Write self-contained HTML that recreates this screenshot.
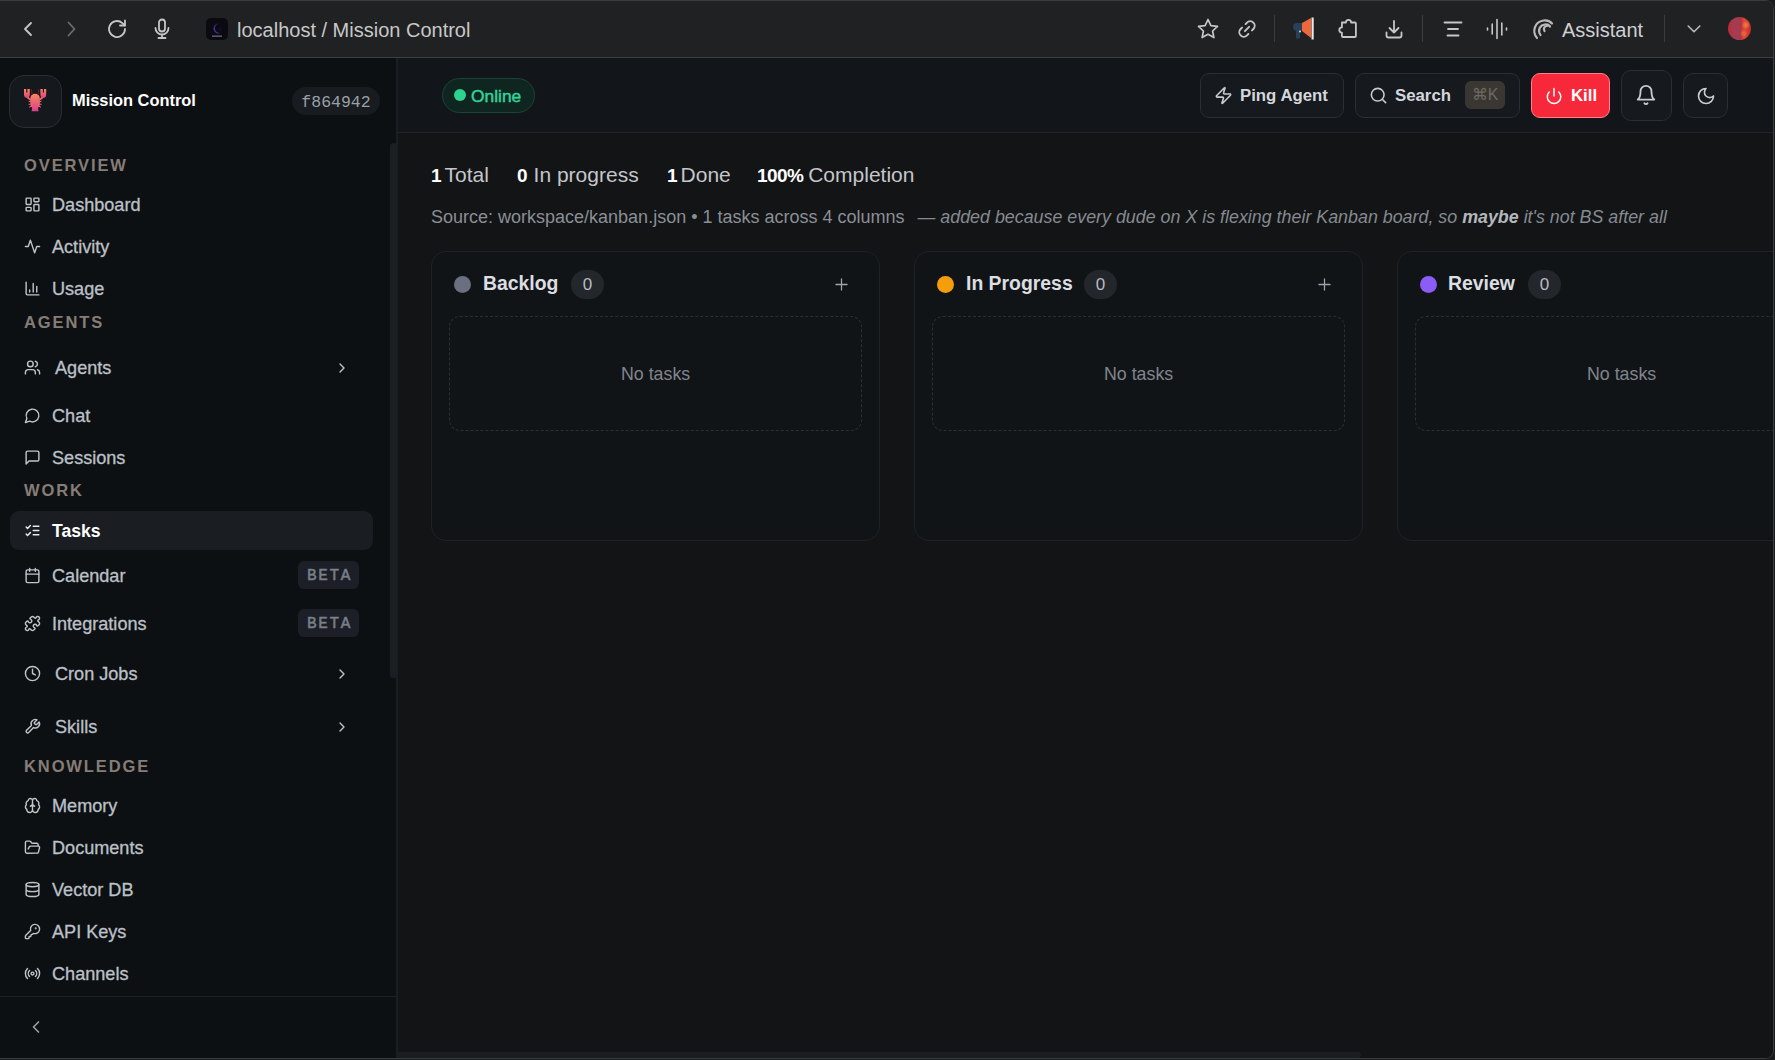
<!DOCTYPE html>
<html><head><meta charset="utf-8">
<style>
*{box-sizing:border-box;margin:0;padding:0}
html,body{width:1775px;height:1060px;overflow:hidden;background:#1b1c1e;font-family:"Liberation Sans",sans-serif}
.a{position:absolute}
.win{position:absolute;left:-12px;top:0;width:1786px;height:1059px;border:1px solid #3b3c3f;border-radius:0 9px 9px 0;overflow:hidden;background:#131415}
.in{position:absolute;left:11px;top:-1px}
svg{display:block;overflow:visible;position:absolute}
.chrome{position:absolute;left:0;top:1px;width:1774px;height:57px;background:#202123;border-bottom:1px solid #3e3f42}
.ct{color:#c8c8c8;font-size:20px;white-space:nowrap}
.ci{fill:none;stroke:#c4c7c5;stroke-width:2;stroke-linecap:round;stroke-linejoin:round}
.vsep{position:absolute;width:1px;height:27px;top:15px;background:#3b3c3f}
.side{position:absolute;left:0;top:58px;width:398px;height:1000px;background:#0d1013;border-right:2px solid #1a1d21}
.sec{position:absolute;left:24px;color:#877d77;font-size:16.5px;font-weight:700;letter-spacing:1.9px;white-space:nowrap}
.it{position:absolute;left:52px;color:#bcc0c8;font-size:18.1px;white-space:nowrap;-webkit-text-stroke:0.3px #bcc0c8}
.si{fill:none;stroke:#c1c4c9;stroke-width:2;stroke-linecap:round;stroke-linejoin:round}
.beta{position:absolute;left:298px;width:61px;height:28px;border-radius:6px;background:#1c1f27;color:#7a7f88;font-family:"Liberation Mono",monospace;font-weight:400;-webkit-text-stroke:0.5px #7a7f88;font-size:16px;letter-spacing:1.6px;line-height:30px;text-align:center;padding-left:2px}
.main{position:absolute;left:398px;top:58px;width:1376px;height:1000px;background:#131415}
.hdr{position:absolute;left:398px;top:58px;width:1376px;height:75px;background:#121519;border-bottom:1px solid #202326}
.btn{position:absolute;top:73px;height:45px;border:1px solid #2a2e35;border-radius:9px;background:#16191d}
.bt{position:absolute;color:#d4d7dc;font-size:16.8px;font-weight:700;white-space:nowrap}
.hi{fill:none;stroke:#c8cbd0;stroke-width:2;stroke-linecap:round;stroke-linejoin:round}
.stat{position:absolute;top:163px;font-size:21px;color:#c3c6cb;white-space:nowrap}
.stat b{color:#fff;font-weight:700;font-size:19px}
.stat i{font-style:normal;margin-left:6px}
.col{position:absolute;top:251px;width:449px;height:290px;border:1px solid #1e2126;border-radius:15px;background:#111417}
.dot{position:absolute;top:276px;width:17px;height:17px;border-radius:50%}
.ctitle{position:absolute;top:272px;color:#dcdee2;font-size:19.4px;font-weight:700;white-space:nowrap}
.cnt{position:absolute;top:270px;width:33px;height:29px;border-radius:15px;background:#23262b;color:#b8bcc2;font-size:17px;line-height:29px;text-align:center}
.dash{position:absolute;top:316px;width:413px;height:115px;border:1px dashed #2b2e33;border-radius:11px}
.nt{position:absolute;top:364px;color:#80858d;font-size:17.8px;white-space:nowrap}
</style></head><body>
<div class="win"><div class="in">

<!-- CHROME -->
<div class="chrome"></div>
<svg class="ci" style="left:14px;top:17px" width="24" height="24" viewBox="0 0 24 24"><path d="M17 6 11 12l6 6" stroke-width="1.8"/></svg>
<svg class="ci" style="left:60px;top:17px" width="24" height="24" viewBox="0 0 24 24"><path d="m8.5 5.5 6 6.5-6 6.5" stroke="#6a6c6f" stroke-width="1.8"/></svg>
<svg class="ci" style="left:105px;top:17px" width="24" height="24" viewBox="0 0 24 24"><path d="M20 12a8 8 0 1 1-2.6-5.9L20 8.5" stroke-width="1.8"/><path d="M20 3.5v5h-5" stroke-width="1.8"/></svg>
<svg class="ci" style="left:150px;top:17px" width="24" height="24" viewBox="0 0 24 24"><rect x="9" y="2.5" width="6" height="12" rx="3" stroke-width="1.8"/><path d="M18.5 11a6.5 6.5 0 0 1-13 0M12 17.5v3.5M8.5 21h7" stroke-width="1.8"/></svg>
<div class="a" style="left:206px;top:18px;width:22px;height:22px;border-radius:5px;background:#0b0a10"></div>
<svg style="left:206px;top:18px" width="22" height="22" viewBox="0 0 22 22"><path d="M12.5 5.5a5 5 0 1 0 2.5 9.3 4 4 0 0 1-2.5-9.3z" fill="#4a2a9a"/><path d="M15.5 9.5l-2 1.5 2 1.5" stroke="#1a1030" stroke-width="1.2" fill="none"/><rect x="6" y="17.5" width="10" height="1.3" fill="#6a6a78"/></svg>
<div class="a ct" style="left:237px;top:19px">localhost / Mission Control</div>

<svg class="ci" style="left:1196px;top:17px" width="24" height="24" viewBox="0 0 24 24"><path d="M12 2.5l2.9 6.1 6.6.8-4.9 4.6 1.3 6.6L12 17.3l-5.9 3.3 1.3-6.6-4.9-4.6 6.6-.8z" stroke-width="1.7"/></svg>
<svg class="ci" style="left:1235px;top:17px" width="24" height="24" viewBox="0 0 24 24"><g transform="rotate(-45 12 12)"><path d="M9.5 16.5H7.5a4.5 4.5 0 0 1 0-9h2M14.5 7.5h2a4.5 4.5 0 0 1 0 9h-2M9 12h6" stroke-width="1.9"/></g></svg>
<div class="vsep" style="left:1274px"></div>
<svg style="left:1292px;top:17px" width="24" height="24" viewBox="0 0 24 24"><path d="M1 10a4 4 0 0 1 4-4h5v8H8v6a2 2 0 0 1-4 0v-6.3A4 4 0 0 1 1 10z" fill="#28405a"/><path d="M10 6l9-5v20l-9-7z" fill="#f0683a"/><rect x="19.5" y="0.5" width="2.2" height="22" fill="#e8e8e8"/><circle cx="8" cy="14.5" r="1" fill="#ddd"/></svg>
<svg class="ci" style="left:1336px;top:17px" width="24" height="24" viewBox="0 0 24 24"><path d="M6.5 6.5h4a2.6 2.6 0 0 1 5.2 0h3.8a1 1 0 0 1 1 1v12.5a1 1 0 0 1-1 1H7.5a1 1 0 0 1-1-1V16.6a2.6 2.6 0 0 1 0-5.2V7.5a1 1 0 0 1 1-1z" stroke-width="1.8" transform="translate(-0.6 -1)"/></svg>
<svg class="ci" style="left:1382px;top:17px" width="24" height="24" viewBox="0 0 24 24"><path d="M4.5 15.5v3a2 2 0 0 0 2 2h11a2 2 0 0 0 2-2v-3M7.5 11l4.5 4.5 4.5-4.5M12 15.5V4" stroke-width="1.8"/></svg>
<div class="vsep" style="left:1422px"></div>
<svg class="ci" style="left:1441px;top:17px" width="24" height="24" viewBox="0 0 24 24"><path d="M3.5 5.5h17M7 12h10M6.5 18.5h11" stroke-width="1.8"/></svg>
<svg class="ci" style="left:1486px;top:17px" width="24" height="24" viewBox="0 0 24 24"><path d="M1.5 11v2M6.2 7v10M11 2.5v19M15.8 6v12M20.5 11v2" stroke-width="1.6"/></svg>
<svg style="left:1531px;top:17px" width="24" height="24" viewBox="0 0 24 24"><path d="M6 21C1 15 3 5 12.5 3.5c3.5-.5 6.8.8 8.5 3" fill="none" stroke="#b9b9b9" stroke-width="2.2" stroke-linecap="round"/><path d="M9.5 18c-3-4.5-1-10 4.5-10.5 2.3-.2 4 .6 5 2" fill="none" stroke="#b9b9b9" stroke-width="2.2" stroke-linecap="round"/><path d="M13.5 14c-1.5-2.5 0-5 2.5-5" fill="none" stroke="#b9b9b9" stroke-width="2.2" stroke-linecap="round"/></svg>
<div class="a ct" style="left:1562px;top:19px;color:#cfd0d2">Assistant</div>
<div class="vsep" style="left:1664px"></div>
<svg class="ci" style="left:1682px;top:17px" width="24" height="24" viewBox="0 0 24 24"><path d="m6.2 9 5.8 5.8 5.8-5.8" stroke-width="1.6" stroke="#b8b9bb"/></svg>
<div class="a" style="left:1728px;top:17px;width:23px;height:23px;border-radius:50%;background:radial-gradient(circle at 78% 35%,rgba(235,150,70,.6) 0 6%,transparent 18%),radial-gradient(circle at 68% 72%,rgba(225,130,60,.55) 0 6%,transparent 18%),linear-gradient(90deg,#c02a38 0%,#a83a50 25%,#9c4058 45%,#b83040 55%,#e04838 70%,#d83a30 85%,#c02a30 100%)"></div>

<!-- SIDEBAR -->
<div class="side"></div>
<div class="a" style="left:390px;top:143px;width:7px;height:535px;border-radius:4px;background:#1b1e22"></div>
<div class="a" style="left:9px;top:75px;width:53px;height:53px;border:1.5px solid #2a2e34;border-radius:15px;background:#15181c"></div>
<svg style="left:23px;top:88px" width="25" height="24" viewBox="0 0 25 24"><defs><linearGradient id="lg" x1="0" y1="0" x2="0" y2="1"><stop offset="0" stop-color="#f58a5e"/><stop offset="0.6" stop-color="#ea5a78"/><stop offset="1" stop-color="#d8408c"/></linearGradient></defs><g fill="url(#lg)"><path d="M1 1h2.2v3.5h1.2V1h2.4v5.5c0 2.2-1.2 3.6-2.9 3.6S1 8.7 1 6.5z"/><path d="M17.4 1h2.4v3.5H21V1h2.2v5.5c0 2.2-1 3.6-2.9 3.6s-2.9-1.4-2.9-3.6z"/><path d="M7.4 10c0-2.6 2-4.2 4.7-4.2s4.7 1.6 4.7 4.2v6.5c0 1.6-.9 2.7-1.8 3.3l.6 3.4h-7l.6-3.4c-.9-.6-1.8-1.7-1.8-3.3z"/></g><path d="M4.5 9.5l4.3 3M19.6 9.5l-4.3 3" stroke="#ec6a6a" stroke-width="1.8"/><path d="M8.5 1.2l.6 5.6M15.7 1.2l-.6 5.6" stroke="#7a1528" stroke-width="1.1"/><path d="M8.6 14l-3-.8M8.6 16l-3 .3M8.8 18l-2.6 1.2M15.6 14l3-.8M15.6 16l3 .3M15.4 18l2.6 1.2" stroke="#e8707a" stroke-width="1"/></svg>
<div class="a" style="left:72px;top:91px;color:#fff;font-size:16.4px;font-weight:700;white-space:nowrap">Mission Control</div>
<div class="a" style="left:292px;top:87px;width:88px;height:28px;border-radius:14px;background:#181b1f;color:#9aa0a8;font-family:'Liberation Mono',monospace;font-size:16.5px;line-height:31px;text-align:center">f864942</div>

<div class="sec" style="top:156px">OVERVIEW</div>
<svg class="si" style="left:24px;top:196px" width="17" height="17" viewBox="0 0 24 24"><rect x="3" y="3" width="7" height="9" rx="1"/><rect x="14" y="3" width="7" height="5" rx="1"/><rect x="14" y="12" width="7" height="9" rx="1"/><rect x="3" y="16" width="7" height="5" rx="1"/></svg>
<div class="it" style="top:195px">Dashboard</div>
<svg class="si" style="left:24px;top:238px" width="17" height="17" viewBox="0 0 24 24"><path d="M22 12h-4l-3 9L9 3l-3 9H2"/></svg>
<div class="it" style="top:237px">Activity</div>
<svg class="si" style="left:24px;top:280px" width="17" height="17" viewBox="0 0 24 24"><path d="M3 3v16a2 2 0 0 0 2 2h16M18 17V9M13 17V5M8 17v-3"/></svg>
<div class="it" style="top:279px">Usage</div>
<div class="sec" style="top:313px">AGENTS</div>
<svg class="si" style="left:24px;top:359px" width="17" height="17" viewBox="0 0 24 24"><path d="M16 21v-2a4 4 0 0 0-4-4H6a4 4 0 0 0-4 4v2M22 21v-2a4 4 0 0 0-3-3.87M16 3.13a4 4 0 0 1 0 7.75"/><circle cx="9" cy="7" r="4"/></svg>
<div class="it" style="top:358px;left:55px">Agents</div>
<svg class="si" style="left:334px;top:360px" width="16" height="16" viewBox="0 0 24 24"><path d="m9 18 6-6-6-6"/></svg>
<svg class="si" style="left:24px;top:407px" width="17" height="17" viewBox="0 0 24 24"><path d="M7.9 20A9 9 0 1 0 4 16.1L2 22Z"/></svg>
<div class="it" style="top:406px">Chat</div>
<svg class="si" style="left:24px;top:449px" width="17" height="17" viewBox="0 0 24 24"><path d="M21 15a2 2 0 0 1-2 2H7l-4 4V5a2 2 0 0 1 2-2h14a2 2 0 0 1 2 2z"/></svg>
<div class="it" style="top:448px">Sessions</div>
<div class="sec" style="top:481px">WORK</div>
<div class="a" style="left:10px;top:511px;width:363px;height:39px;border-radius:9px;background:#1a1d22"></div>
<svg class="si" style="left:24px;top:522px;stroke:#e8eaed" width="17" height="17" viewBox="0 0 24 24"><path d="m3 17 2 2 4-4M3 7l2 2 4-4M13 6h8M13 12h8M13 18h8"/></svg>
<div class="it" style="top:521px;color:#fff;font-weight:700;font-size:17.6px;-webkit-text-stroke:0">Tasks</div>
<svg class="si" style="left:24px;top:567px" width="17" height="17" viewBox="0 0 24 24"><path d="M8 2v4M16 2v4M3 10h18"/><rect x="3" y="4" width="18" height="18" rx="2"/></svg>
<div class="it" style="top:566px">Calendar</div>
<div class="beta" style="top:561px">BETA</div>
<svg class="si" style="left:24px;top:615px" width="17" height="17" viewBox="0 0 24 24"><path d="M19.44 7.85c-.05.32.06.65.29.88l1.57 1.57c.47.47.7 1.09.7 1.7s-.23 1.24-.7 1.71l-1.61 1.6a.98.98 0 0 1-.84.28c-.47-.07-.8-.48-.97-.92a2.5 2.5 0 1 0-3.21 3.21c.45.17.86.5.93.97a.98.98 0 0 1-.28.84l-1.61 1.6a2.4 2.4 0 0 1-1.7.71 2.4 2.4 0 0 1-1.7-.7l-1.57-1.57a1.03 1.03 0 0 0-.88-.29c-.49.07-.84.5-1.02.97a2.5 2.5 0 1 1-3.24-3.240c.46-.18.9-.53.97-1.02a1.03 1.03 0 0 0-.29-.88L2.7 13.7A2.4 2.4 0 0 1 2 12c0-.62.24-1.23.7-1.7l1.530-1.53c.24-.24.58-.35.92-.3.51.08.88.53 1.07 1.01a2.5 2.5 0 1 0 3.26-3.26c-.48-.2-.93-.56-1.01-1.07-.05-.34.06-.68.3-.92L10.3 2.7A2.4 2.4 0 0 1 12 2c.62 0 1.23.24 1.7.7l1.57 1.57c.23.23.56.34.88.29.49-.07.84-.5 1.02-.97a2.5 2.5 0 1 1 3.24 3.24c-.46.18-.9.53-.97 1.02z"/></svg>
<div class="it" style="top:614px">Integrations</div>
<div class="beta" style="top:609px">BETA</div>
<svg class="si" style="left:24px;top:665px" width="17" height="17" viewBox="0 0 24 24"><circle cx="12" cy="12" r="10"/><path d="M12 6v6l4 2"/></svg>
<div class="it" style="top:664px;left:55px">Cron Jobs</div>
<svg class="si" style="left:334px;top:666px" width="16" height="16" viewBox="0 0 24 24"><path d="m9 18 6-6-6-6"/></svg>
<svg class="si" style="left:24px;top:718px" width="17" height="17" viewBox="0 0 24 24"><path d="M14.7 6.3a1 1 0 0 0 0 1.4l1.6 1.6a1 1 0 0 0 1.4 0l3.77-3.77a6 6 0 0 1-7.94 7.94l-6.91 6.91a2.12 2.12 0 0 1-3-3l6.91-6.91a6 6 0 0 1 7.94-7.94l-3.76 3.76z"/></svg>
<div class="it" style="top:717px;left:55px">Skills</div>
<svg class="si" style="left:334px;top:719px" width="16" height="16" viewBox="0 0 24 24"><path d="m9 18 6-6-6-6"/></svg>
<div class="sec" style="top:757px">KNOWLEDGE</div>
<svg class="si" style="left:24px;top:797px" width="17" height="17" viewBox="0 0 24 24"><path d="M12 5a3 3 0 1 0-6 .13 4 4 0 0 0-2.53 5.77 4 4 0 0 0 .56 6.59A4 4 0 1 0 12 18ZM12 5a3 3 0 1 1 6 .13 4 4 0 0 1 2.53 5.77 4 4 0 0 1-.56 6.59A4 4 0 1 1 12 18ZM15 13a4.5 4.5 0 0 1-3-4 4.5 4.5 0 0 1-3 4M12 5v13"/></svg>
<div class="it" style="top:796px">Memory</div>
<svg class="si" style="left:24px;top:839px" width="17" height="17" viewBox="0 0 24 24"><path d="m6 14 1.5-2.9A2 2 0 0 1 9.24 10H20a2 2 0 0 1 1.94 2.5l-1.54 6a2 2 0 0 1-1.95 1.5H4a2 2 0 0 1-2-2V5a2 2 0 0 1 2-2h3.9a2 2 0 0 1 1.69.9l.81 1.2a2 2 0 0 0 1.67.9H18a2 2 0 0 1 2 2v2"/></svg>
<div class="it" style="top:838px">Documents</div>
<svg class="si" style="left:24px;top:881px" width="17" height="17" viewBox="0 0 24 24"><ellipse cx="12" cy="5" rx="9" ry="3"/><path d="M3 5v14a9 3 0 0 0 18 0V5M3 12a9 3 0 0 0 18 0"/></svg>
<div class="it" style="top:880px">Vector DB</div>
<svg class="si" style="left:24px;top:923px" width="17" height="17" viewBox="0 0 24 24"><path d="M2.59 17.41A2 2 0 0 0 2 18.83V21a1 1 0 0 0 1 1h3a1 1 0 0 0 1-1v-1a1 1 0 0 1 1-1h1a1 1 0 0 0 1-1v-1a1 1 0 0 1 1-1h.17a2 2 0 0 0 1.41-.59l.82-.81a6.5 6.5 0 1 0-4-4z"/><circle cx="16.5" cy="7.5" r=".5" fill="#c1c4c9"/></svg>
<div class="it" style="top:922px">API Keys</div>
<svg class="si" style="left:24px;top:965px" width="17" height="17" viewBox="0 0 24 24"><path d="M4.9 19.1C1 15.2 1 8.8 4.9 4.9M7.8 16.2c-2.3-2.3-2.3-6.1 0-8.5M16.2 7.8c2.3 2.3 2.3 6.1 0 8.5M19.1 4.9C23 8.8 23 15.1 19.1 19"/><circle cx="12" cy="12" r="2"/></svg>
<div class="it" style="top:964px">Channels</div>
<div class="a" style="left:0;top:996px;width:397px;height:1px;background:#1f2226"></div>
<svg class="si" style="left:26px;top:1017px" width="20" height="20" viewBox="0 0 24 24"><path d="m15 18-6-6 6-6" stroke="#9ca0a6"/></svg>

<!-- MAIN -->
<div class="main"></div>
<div class="hdr"></div>
<div class="a" style="left:442px;top:78px;width:93px;height:35px;border-radius:18px;background:#0f2620;border:1px solid #1a4536"></div>
<div class="a" style="left:454px;top:89px;width:12px;height:12px;border-radius:50%;background:#2dd48f"></div>
<div class="a" style="left:471px;top:86px;color:#34d399;font-size:17.4px;font-weight:400;-webkit-text-stroke:0.45px #34d399;white-space:nowrap">Online</div>

<div class="btn" style="left:1200px;width:144px"></div>
<svg class="hi" style="left:1214px;top:86px" width="19" height="19" viewBox="0 0 24 24"><path d="M4 14a1 1 0 0 1-.78-1.63l9.9-10.2a.5.5 0 0 1 .86.46l-1.92 6.02A1 1 0 0 0 13 10h7a1 1 0 0 1 .78 1.63l-9.9 10.2a.5.5 0 0 1-.86-.46l1.92-6.02A1 1 0 0 0 11 14z"/></svg>
<div class="bt" style="left:1240px;top:86px">Ping Agent</div>
<div class="btn" style="left:1355px;width:165px"></div>
<svg class="hi" style="left:1369px;top:86px" width="19" height="19" viewBox="0 0 24 24"><circle cx="11" cy="11" r="8"/><path d="m21 21-4.3-4.3"/></svg>
<div class="bt" style="left:1395px;top:86px">Search</div>
<div class="a" style="left:1465px;top:81px;width:40px;height:28px;border-radius:6px;background:#3a3733;color:#6e6862;font-size:16px;line-height:28px;text-align:center;white-space:nowrap">⌘K</div>
<div class="a" style="left:1531px;top:73px;width:79px;height:45px;border-radius:9px;background:#f7283a;border:1px solid #ff8088"></div>
<svg class="hi" style="left:1545px;top:87px" width="18" height="18" viewBox="0 0 24 24"><path d="M12 2v10M18.4 6.6a9 9 0 1 1-12.77.04" stroke="#fff"/></svg>
<div class="bt" style="left:1571px;top:86px;color:#fff">Kill</div>
<div class="a" style="left:1621px;top:70px;width:51px;height:51px;border:1px solid #2a2e35;border-radius:10px;background:#16191d"></div>
<svg class="hi" style="left:1635px;top:84px" width="22" height="22" viewBox="0 0 24 24"><path d="M6 8a6 6 0 0 1 12 0c0 7 3 9 3 9H3s3-2 3-9M10.3 21a1.94 1.94 0 0 0 3.4 0"/></svg>
<div class="btn" style="left:1683px;width:45px;border-radius:10px"></div>
<svg class="hi" style="left:1696px;top:86px" width="20" height="20" viewBox="0 0 24 24"><path d="M12 3a6 6 0 0 0 9 9 9 9 0 1 1-9-9Z"/></svg>

<div class="stat" style="left:431px"><b>1</b><i style="margin-left:3px">Total</i></div>
<div class="stat" style="left:517px"><b>0</b><i>In progress</i></div>
<div class="stat" style="left:667px"><b>1</b><i style="margin-left:3px">Done</i></div>
<div class="stat" style="left:757px"><b style="letter-spacing:-0.6px">100%</b><i style="margin-left:5px">Completion</i></div>
<div class="a" style="left:431px;top:207px;color:#8a8f96;font-size:18px;white-space:nowrap">Source: workspace/kanban.json • 1 tasks across 4 columns <span style="margin-left:8px;font-style:italic;color:#858a91;font-size:17.85px">— added because every dude on X is flexing their Kanban board, so <b style="color:#b3b7bd">maybe</b> it's not BS after all</span></div>

<div class="a" style="left:398px;top:1052px;width:963px;height:6px;border-radius:0 3px 3px 0;background:#1b1e21"></div>
<div class="col" style="left:431px"></div>
<div class="dot" style="left:454px;background:#6b7080"></div>
<div class="ctitle" style="left:483px">Backlog</div>
<div class="cnt" style="left:571px">0</div>
<svg class="hi" style="left:832px;top:275px" width="19" height="19" viewBox="0 0 24 24"><path d="M5 12h14M12 5v14" stroke="#a0a4aa" stroke-width="1.6"/></svg>
<div class="dash" style="left:449px"></div>
<div class="nt" style="left:621px">No tasks</div>

<div class="col" style="left:914px"></div>
<div class="dot" style="left:937px;background:#f59e0b"></div>
<div class="ctitle" style="left:966px">In Progress</div>
<div class="cnt" style="left:1084px">0</div>
<svg class="hi" style="left:1315px;top:275px" width="19" height="19" viewBox="0 0 24 24"><path d="M5 12h14M12 5v14" stroke="#a0a4aa" stroke-width="1.6"/></svg>
<div class="dash" style="left:932px"></div>
<div class="nt" style="left:1104px">No tasks</div>

<div class="col" style="left:1397px"></div>
<div class="dot" style="left:1420px;background:#8b5cf6"></div>
<div class="ctitle" style="left:1448px">Review</div>
<div class="cnt" style="left:1528px">0</div>
<div class="dash" style="left:1415px"></div>
<div class="nt" style="left:1587px">No tasks</div>

</div></div>
</body></html>
